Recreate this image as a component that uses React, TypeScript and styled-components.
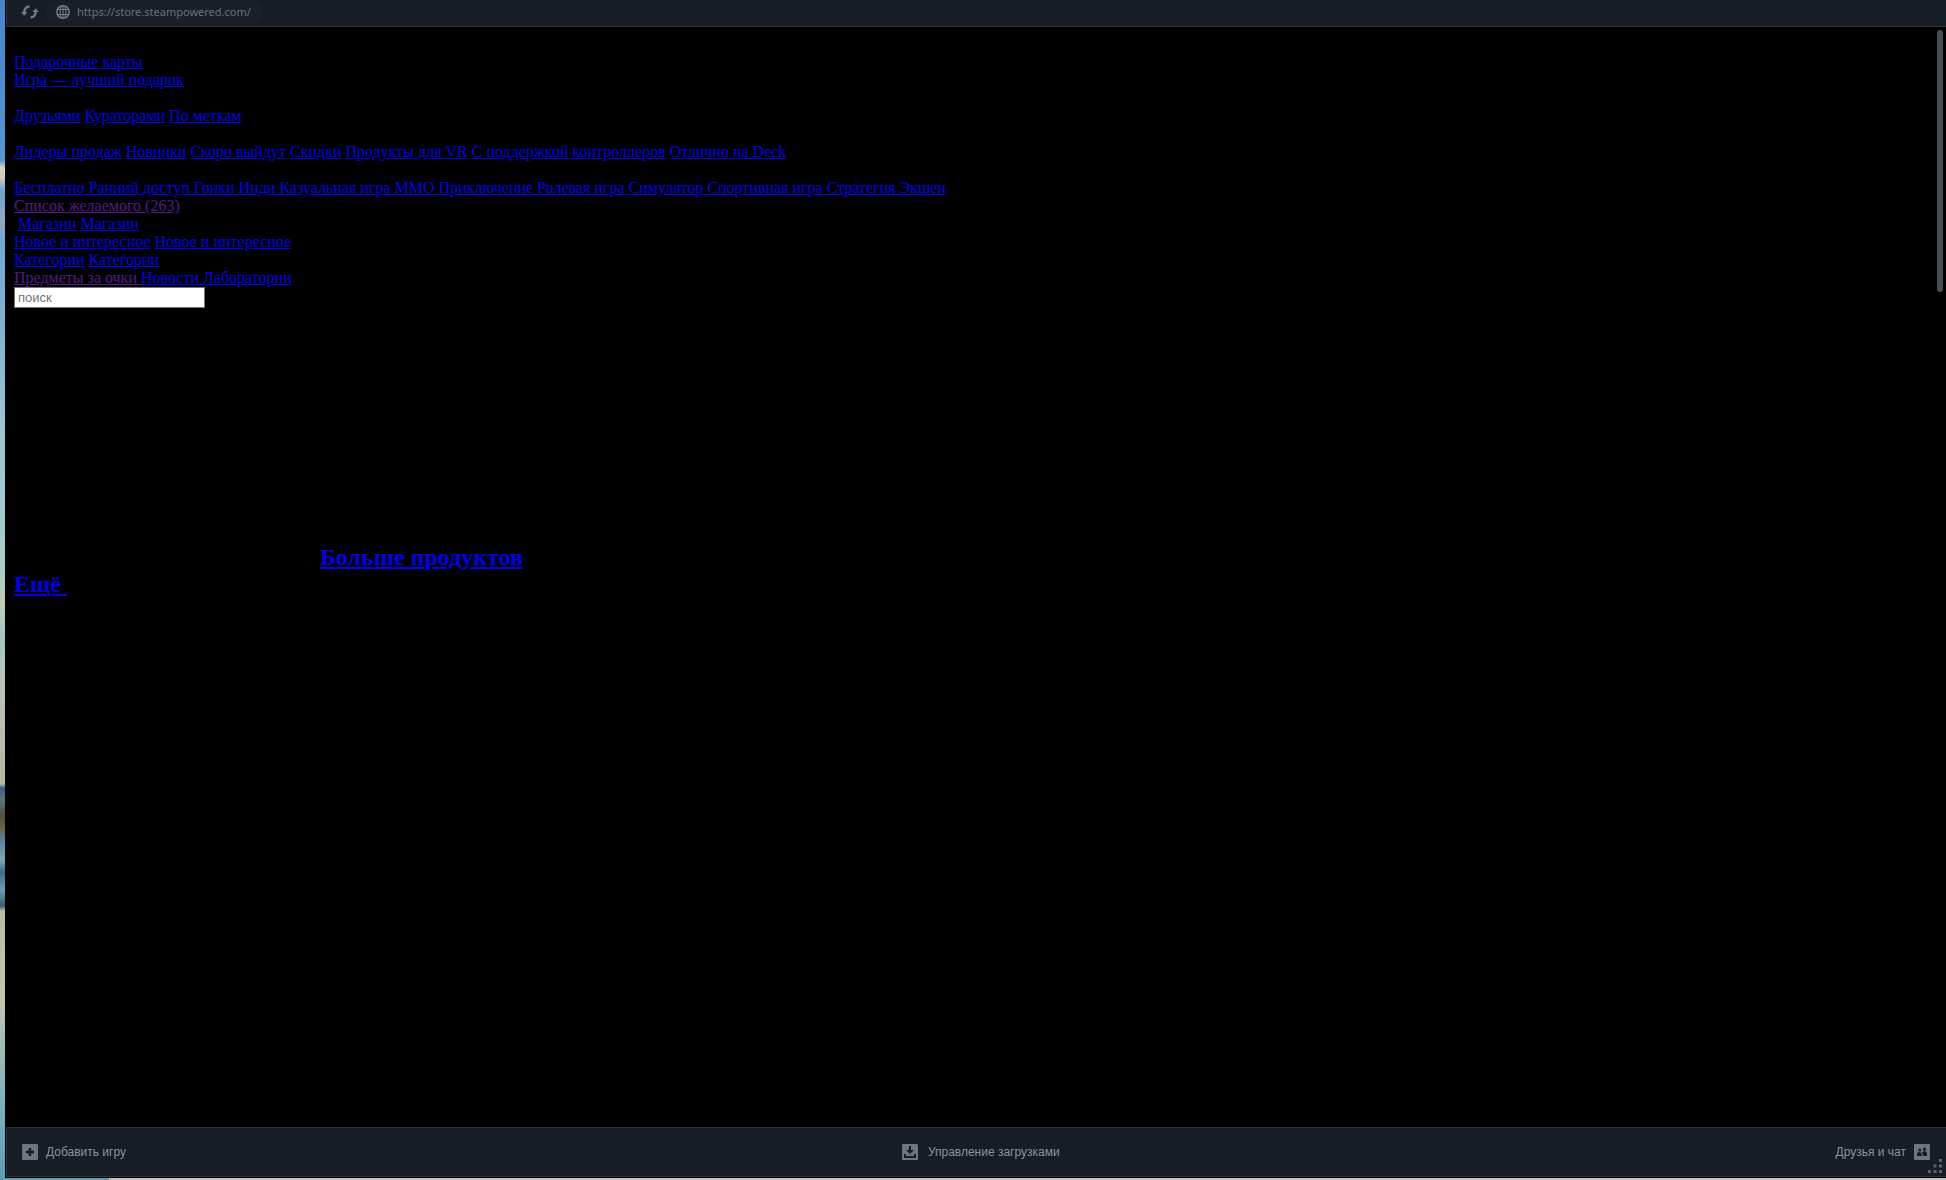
import React from "react";
import styled, { createGlobalStyle } from "styled-components";

const GlobalStyle = createGlobalStyle`
  *, *::before, *::after { box-sizing: border-box; }
  body { margin: 0; background: #000; }
`;

const Desktop = styled.div`
  min-height: 100vh;
  display: flex;
  padding: 0 0 2px 5px;
  background:
    linear-gradient(to right, #5e9cab 0 109px, #c4c6c0 109px) bottom / 100% 2px no-repeat,
    linear-gradient(
      to bottom,
      #4585cc 0,
      #5595d0 160px,
      #d8d3c8 168px,
      #cfc9c0 178px,
      #6ea3d0 190px,
      #90a9c0 222px,
      #6fa8d2 240px,
      #7fb3d4 330px,
      #9cc6d2 430px,
      #a9cdcb 570px,
      #c2ccb6 605px,
      #a3c8c4 630px,
      #b9c4b4 690px,
      #b8b6a4 784px,
      #3c5f80 788px,
      #57777f 800px,
      #4f5142 815px,
      #6e604a 828px,
      #5b82a2 840px,
      #7fa4b4 860px,
      #3d6b91 872px,
      #6d9bb2 890px,
      #3c5a70 906px,
      #b9bda6 911px,
      #c3c5b0 1000px,
      #9dbcb6 1050px,
      #74b0bf 1110px,
      #5c9fb4 100%
    ) left / 5px 100% no-repeat #000;
`;

const Window = styled.div`
  flex: 1;
  min-width: 0;
  display: flex;
  flex-direction: column;
  padding: 0 0 1px 1px;
  background: #000;
`;

const AddressBar = styled.header`
  height: 27px;
  display: flex;
  align-items: center;
  gap: 6px;
  padding: 0 12px 2px 14px;
  background: #171d25;
  border-left: 1px solid #2d333c;
  border-bottom: 1px solid #2d333c;
`;

const IconButton = styled.button`
  display: flex;
  padding: 0;
  border: 0;
  background: none;
  color: #717a85;
`;

const UrlPill = styled.label`
  display: flex;
  align-items: center;
  gap: 7px;
  width: 218px;
  height: 22px;
  padding: 0 12px 0 11px;
  border-radius: 11px;
  background: #1b1f28;
  color: #717a85;
`;

const UrlInput = styled.input`
  flex: 1;
  min-width: 0;
  padding: 0;
  border: 0;
  outline: 0;
  background: none;
  color: #67707b;
  font: 11px/16px "Noto Sans", sans-serif;
`;

const Page = styled.main`
  position: relative;
  flex: 1;
  padding: 26px 8px 8px;
  font: 16px/18px "Liberation Serif", "Times New Roman", serif;
`;

const LinkLine = styled.nav<{ $spaced?: boolean; $indent?: boolean }>`
  margin-top: ${(p) => (p.$spaced ? "18px" : "0")};
  padding-left: ${(p) => (p.$indent ? "4px" : "0")};
`;

const PageLink = styled.a<{ $visited?: boolean }>`
  color: ${(p) => (p.$visited ? "#551a8b" : "#0000ee")};
  text-decoration: underline;
  white-space: pre-wrap;
`;

const SearchInput = styled.input`
  display: block;
  width: 191px;
  height: 21px;
  padding: 1px 3px;
  border: 1px solid #767676;
  background: #fff;
  font: 13px/15px "Liberation Sans", Arial, sans-serif;

  &::placeholder { color: #757575; }
`;

const MoreHeading = styled.h2`
  margin: 236px 0 0;
  font-size: 24px;
  line-height: 27px;
  text-indent: 306px;
`;

const MoreLine = styled.div`
  font-size: 24px;
  font-weight: bold;
  line-height: 27px;
`;

const ScrollThumb = styled.div`
  position: absolute;
  top: 3px;
  right: 3px;
  width: 6px;
  height: 262px;
  border-radius: 3px;
  background: #464d58;
`;

const BottomBar = styled.footer`
  position: relative;
  height: 50px;
  display: flex;
  justify-content: space-between;
  align-items: center;
  padding: 0 16px 0 15px;
  background: #171d25;
  border: 1px solid #2d333c;
  border-right: 0;
`;

const BarButton = styled.button<{ $gap?: number }>`
  display: flex;
  align-items: center;
  gap: ${(p) => p.$gap ?? 8}px;
  padding: 0;
  border: 0;
  background: none;
  color: #8b929a;
  font: 12px/16px "Liberation Sans", Arial, sans-serif;
`;

const Grip = styled.svg`
  position: absolute;
  right: 4px;
  bottom: 3px;
`;

const RefreshIcon = () => (
  <svg width="18" height="14" viewBox="0 0 18 14" aria-hidden="true">
    <path d="M8.500 1.500C5 1.500 3.400 4 3.200 8M9.500 12.500c3.500 0 5.100-2.500 5.300-6.500" fill="none" stroke="currentColor" strokeWidth="2.300" />
    <path d="M0 7h6.600L3.200 10.800zM18 7h-6.600L14.800 3.200z" fill="currentColor" />
  </svg>
);

const GlobeIcon = () => (
  <svg width="14" height="14" viewBox="0 0 14 14" fill="none" stroke="currentColor" aria-hidden="true">
    <circle cx="7" cy="7" r="6.200" strokeWidth="1.500" />
    <ellipse cx="7" cy="7" rx="3" ry="6.200" />
    <path d="M7 1v12M1.500 4.500h11M1.500 9.500h11" />
  </svg>
);

const AddIcon = () => (
  <svg width="16" height="16" viewBox="0 0 16 16" aria-hidden="true">
    <rect width="16" height="16" rx="1" fill="#6e7482" />
    <path d="M8 4v8M4 8h8" stroke="#171d25" strokeWidth="2.500" />
  </svg>
);

const DownloadIcon = () => (
  <svg width="16" height="16" viewBox="0 0 16 16" aria-hidden="true">
    <rect width="16" height="16" rx="1" fill="#6e7482" />
    <path d="M8 2v5M3 10v3h10v-3" fill="none" stroke="#171d25" strokeWidth="2" />
    <path d="M4 6h8l-4 4z" fill="#171d25" />
  </svg>
);

const FriendsIcon = () => (
  <svg width="16" height="16" viewBox="0 0 16 16" aria-hidden="true">
    <rect width="16" height="16" rx="1" fill="#6e7482" />
    <g fill="#171d25">
      <circle cx="5.700" cy="6" r="1.500" />
      <circle cx="10.500" cy="5.200" r="1.600" />
      <path d="M3 12V10.500Q3 8 5.500 8 7.800 8 7.800 10.500V12zM8.600 12V10L8 8.200Q8.800 7.300 10.500 7.300 13 7.300 13 9.800V12z" />
    </g>
  </svg>
);

type LinkItem = { text: string; visited?: boolean };
type Line = { links: LinkItem[]; spaced?: boolean; indent?: boolean; joined?: boolean };

const links = (...texts: string[]): LinkItem[] => texts.map((text) => ({ text }));

const lines: Line[] = [
  { links: links("Подарочные карты") },
  { links: links("Игра — лучший подарок") },
  { links: links("Друзьями", "Кураторами", "По меткам"), spaced: true },
  {
    links: links("Лидеры продаж", "Новинки", "Скоро выйдут", "Скидки", "Продукты для VR", "С поддержкой контроллеров", "Отлично на Deck"),
    spaced: true,
  },
  {
    links: links(
      "Бесплатно ", "Ранний доступ ", "Гонки ", "Инди ", "Казуальная игра ", "MMO ",
      "Приключение ", "Ролевая игра ", "Симулятор ", "Спортивная игра ", "Стратегия ", "Экшен",
    ),
    spaced: true,
    joined: true,
  },
  { links: [{ text: "Список желаемого (263)", visited: true }] },
  { links: links("Магазин", "Магазин"), indent: true },
  { links: links("Новое и интересное", "Новое и интересное") },
  { links: links("Категории", "Категории") },
  { links: [{ text: "Предметы за очки ", visited: true }, { text: "Новости " }, { text: "Лаборатории" }], joined: true },
];

export default function App() {
  return (
    <>
      <GlobalStyle />
      <Desktop>
        <Window>
          <AddressBar>
            <IconButton type="button" aria-label="Обновить">
              <RefreshIcon />
            </IconButton>
            <UrlPill>
              <GlobeIcon />
              <UrlInput aria-label="Адрес" readOnly value="https://store.steampowered.com/" />
            </UrlPill>
          </AddressBar>
          <Page>
            {lines.map((line, i) => (
              <LinkLine key={i} $spaced={line.spaced} $indent={line.indent}>
                {line.links.map((link, j) => (
                  <React.Fragment key={j}>
                    {j > 0 && !line.joined && " "}
                    <PageLink href="#" $visited={link.visited}>{link.text}</PageLink>
                  </React.Fragment>
                ))}
              </LinkLine>
            ))}
            <SearchInput type="text" aria-label="поиск" placeholder="поиск" />
            <MoreHeading>
              <PageLink href="#">Больше продуктов</PageLink>
            </MoreHeading>
            <MoreLine>
              <PageLink href="#">{"Ещё\u00a0"}</PageLink>
            </MoreLine>
            <ScrollThumb />
          </Page>
          <BottomBar>
            <BarButton type="button">
              <AddIcon />
              Добавить игру
            </BarButton>
            <BarButton type="button" $gap={10}>
              <DownloadIcon />
              Управление загрузками
            </BarButton>
            <BarButton type="button">
              Друзья и чат
              <FriendsIcon />
            </BarButton>
            <Grip width="14" height="14" viewBox="0 0 14 14" fill="#5c626c" aria-hidden="true">
              <path d="M11 0h3v3h-3zM5.500 5.500h3v3h-3zM11 5.500h3v3h-3zM0 11h3v3H0zM5.500 11h3v3h-3zM11 11h3v3h-3z" />
            </Grip>
          </BottomBar>
        </Window>
      </Desktop>
    </>
  );
}
